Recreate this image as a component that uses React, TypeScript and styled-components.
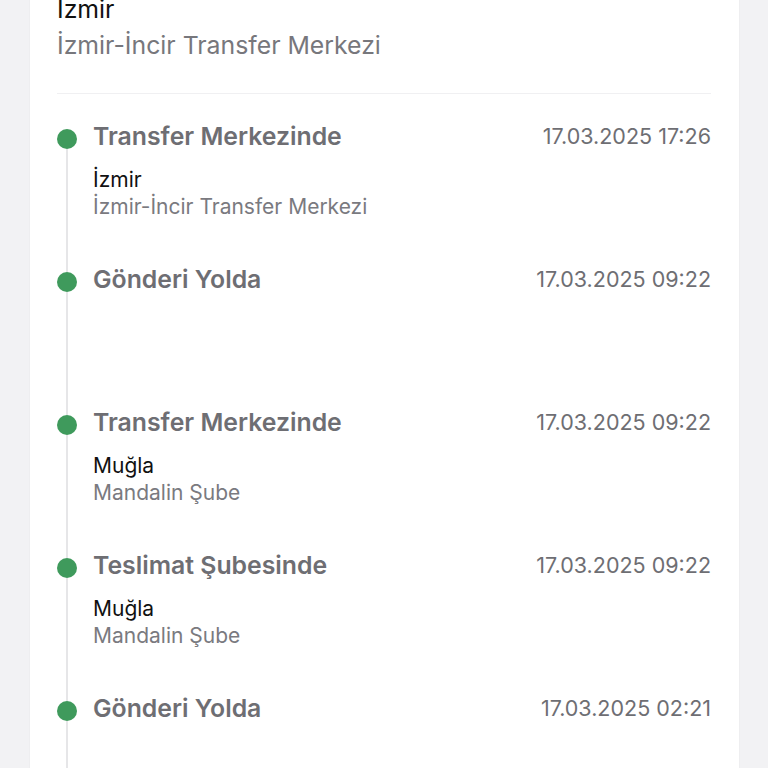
import styled, { createGlobalStyle } from 'styled-components';

const GlobalStyle = createGlobalStyle`
  html, body {
    margin: 0;
    padding: 0;
    background: #f2f2f4;
    font-family: Inter, "Noto Sans", "Liberation Sans", sans-serif;
    overflow: hidden;
  }
`

interface Movement {
  status: string
  date: string
  city?: string
  branch?: string
}

const movements: Movement[] = [
  { status: 'Transfer Merkezinde', date: '17.03.2025 17:26', city: 'İzmir', branch: 'İzmir-İncir Transfer Merkezi' },
  { status: 'Gönderi Yolda', date: '17.03.2025 09:22' },
  { status: 'Transfer Merkezinde', date: '17.03.2025 09:22', city: 'Muğla', branch: 'Mandalin Şube' },
  { status: 'Teslimat Şubesinde', date: '17.03.2025 09:22', city: 'Muğla', branch: 'Mandalin Şube' },
  { status: 'Gönderi Yolda', date: '17.03.2025 02:21' },
]

const Page = styled.div`
  height: 768px;
  overflow: hidden;
`

const Card = styled.div`
  margin: -9px 29px 0 30px;
  padding: 0 28px 0 27px;
  background: #fff;
  box-shadow: 0 0 2px rgba(0, 0, 0, 0.05);
`

const Header = styled.div`
  padding-bottom: 30px;
  border-bottom: 1.5px solid #f0f0f2;
`

const HeaderCity = styled.div`
  font-size: 24.8px;
  line-height: 36px;
  color: #111;
`

const HeaderBranch = styled.div`
  font-size: 24.8px;
  line-height: 36px;
  color: #77777c;
`

const Timeline = styled.div`
  padding-top: 27px;
`

const Item = styled.div`
  display: grid;
  grid-template-columns: 20px 1fr;
  column-gap: 17px;
  height: 143px;
`

const Marker = styled.div`
  display: flex;
  flex-direction: column;
  align-items: center;
`

const Connector = styled.div<{ $hidden?: boolean; $grow?: boolean }>`
  width: 2px;
  background: ${p => (p.$hidden ? 'transparent' : '#e6e6e8')};
  height: 8px;
  ${p => p.$grow && 'flex: 1;'}
`

const Dot = styled.div`
  width: 20px;
  height: 20px;
  border-radius: 50%;
  background: #3f9a5c;
  flex-shrink: 0;
`

const Content = styled.div`
  display: flex;
  flex-direction: column;
  margin-left: -1px;
`

const TitleRow = styled.div`
  display: flex;
  justify-content: space-between;
  align-items: center;
  height: 30px;
`

const Status = styled.div`
  font-size: 24.8px;
  font-weight: 600;
  color: #6e6e73;
`

const DateText = styled.div`
  font-size: 21.5px;
  color: #6e6e73;
`

const Location = styled.div`
  margin-top: 15px;
`

const City = styled.div`
  font-size: 21px;
  line-height: 27px;
  color: #111;
`

const Branch = styled.div`
  font-size: 21px;
  line-height: 28px;
  color: #7a7a7f;
`

const App = (): JSX.Element => {
  return (
    <Page>
      <GlobalStyle />
      <Card>
        <Header>
          <HeaderCity>İzmir</HeaderCity>
          <HeaderBranch>İzmir-İncir Transfer Merkezi</HeaderBranch>
        </Header>
        <Timeline>
          {movements.map((m, i) => (
            <Item key={i}>
              <Marker>
                <Connector $hidden={i === 0} />
                <Dot />
                <Connector $grow />
              </Marker>
              <Content>
                <TitleRow>
                  <Status>{m.status}</Status>
                  <DateText>{m.date}</DateText>
                </TitleRow>
                {m.city && (
                  <Location>
                    <City>{m.city}</City>
                    <Branch>{m.branch}</Branch>
                  </Location>
                )}
              </Content>
            </Item>
          ))}
        </Timeline>
      </Card>
    </Page>
  )
}

export default App
